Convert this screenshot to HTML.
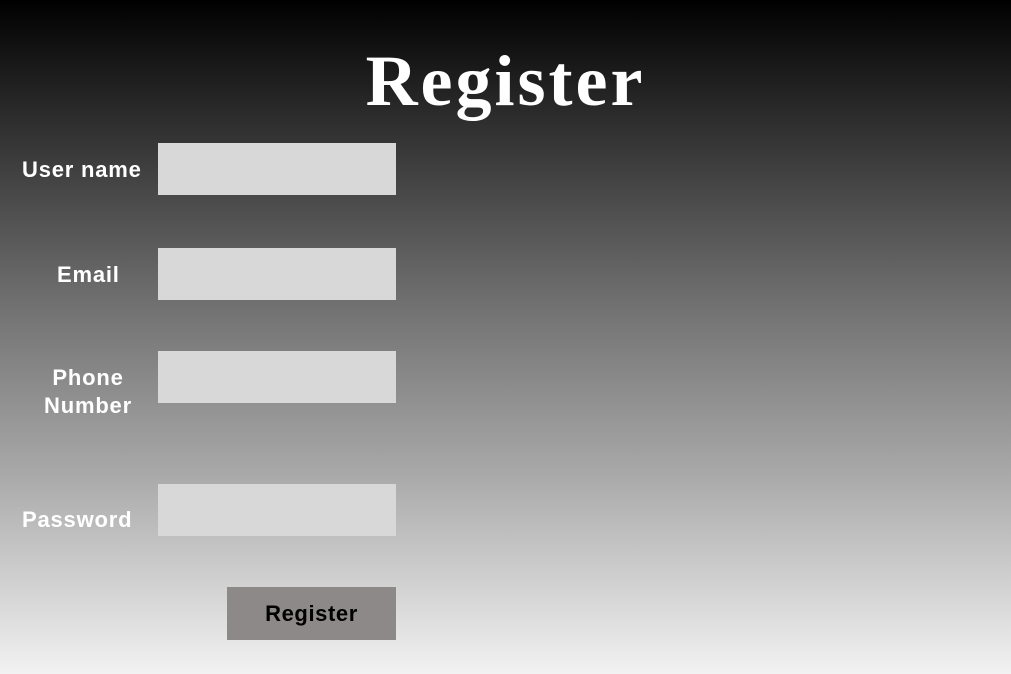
<!DOCTYPE html>
<html><head><meta charset="utf-8"><style>
html,body{margin:0;padding:0}
body{width:1011px;height:674px;overflow:hidden;position:relative;background:linear-gradient(to bottom,#000 0%,#2e2e2e 18%,#707070 45%,#a8a8a8 70%,#f2f2f2 100%);font-family:"Liberation Sans",sans-serif}
h1{position:absolute;left:0;width:1011px;top:40px;margin:0;text-align:center;font-family:"Liberation Serif",serif;font-weight:bold;font-size:72px;color:#fff;letter-spacing:3px}
.l{position:absolute;color:#fff;font-weight:bold;font-size:22px;letter-spacing:0.8px;text-align:center;line-height:28px;white-space:nowrap}
.i{position:absolute;left:158px;width:238px;height:52px;background:#d8d8d8}
.b{position:absolute;left:227px;top:587px;width:169px;height:53px;background:#8c8988;color:#000;font-weight:bold;font-size:22px;letter-spacing:0.6px;text-align:center;line-height:53px}
</style></head><body>
<h1>Register</h1>
<div class="l" style="left:22px;top:156px">User name</div>
<div class="i" style="top:143px"></div>
<div class="l" style="left:57px;top:261px">Email</div>
<div class="i" style="top:248px"></div>
<div class="l" style="left:38px;top:364px;width:100px">Phone<br>Number</div>
<div class="i" style="top:351px"></div>
<div class="l" style="left:22px;top:506px">Password</div>
<div class="i" style="top:484px"></div>
<div class="b">Register</div>
</body></html>
